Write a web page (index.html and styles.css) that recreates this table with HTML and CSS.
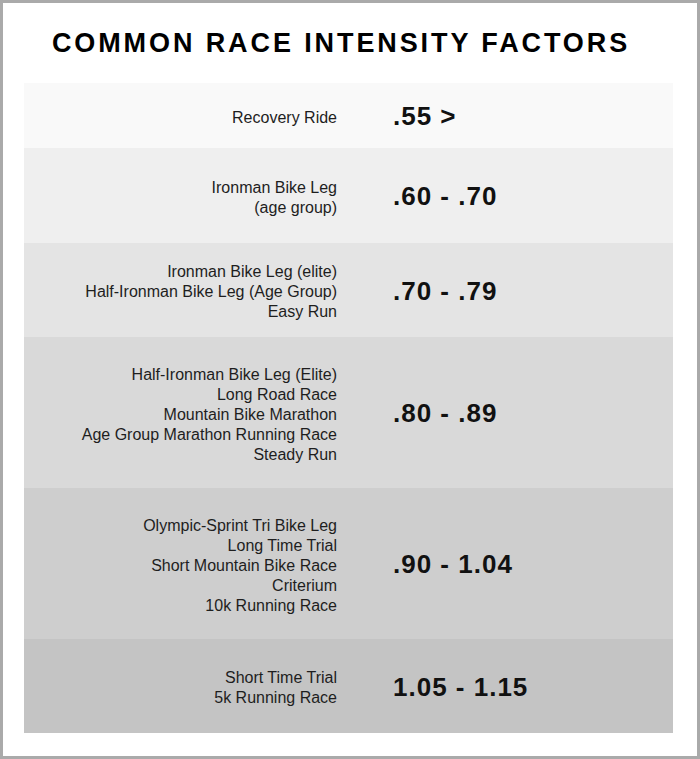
FILE: index.html
```html
<!DOCTYPE html>
<html>
<head>
<meta charset="utf-8">
<link rel="stylesheet" href="styles.css">
</head>
<body>
<div class="frame">
  <h1 class="title">COMMON RACE INTENSITY FACTORS</h1>
  <div class="table">
    <div class="row r1">
      <div class="label">Recovery Ride</div>
      <div class="value">.55 &gt;</div>
    </div>
    <div class="row r2">
      <div class="label">Ironman Bike Leg<br>(age group)</div>
      <div class="value">.60 - .70</div>
    </div>
    <div class="row r3">
      <div class="label">Ironman Bike Leg (elite)<br>Half-Ironman Bike Leg (Age Group)<br>Easy Run</div>
      <div class="value">.70 - .79</div>
    </div>
    <div class="row r4">
      <div class="label">Half-Ironman Bike Leg (Elite)<br>Long Road Race<br>Mountain Bike Marathon<br>Age Group Marathon Running Race<br>Steady Run</div>
      <div class="value">.80 - .89</div>
    </div>
    <div class="row r5">
      <div class="label">Olympic-Sprint Tri Bike Leg<br>Long Time Trial<br>Short Mountain Bike Race<br>Criterium<br>10k Running Race</div>
      <div class="value">.90 - 1.04</div>
    </div>
    <div class="row r6">
      <div class="label">Short Time Trial<br>5k Running Race</div>
      <div class="value">1.05 - 1.15</div>
    </div>
  </div>
</div>
</body>
</html>
```
FILE: styles.css
```css
html, body {
  margin: 0;
  padding: 0;
  background: #ffffff;
}
.frame {
  box-sizing: border-box;
  width: 700px;
  height: 759px;
  border: 3px solid #aaaaaa;
  font-family: "Liberation Sans", Arial, sans-serif;
}
.title {
  margin: 0;
  height: 80px;
  display: flex;
  align-items: center;
  justify-content: center;
  padding-right: 18px;
  font-size: 27px;
  font-weight: bold;
  letter-spacing: 2.9px;
  color: #000;
}
.table {
  margin-left: 21px;
  width: 649px;
  display: grid;
  grid-template-rows: 65px 95px 94px 151px 151px 94px;
}
.row {
  display: grid;
  grid-template-columns: 313px 1fr;
  column-gap: 56px;
  align-items: center;
}
.label {
  text-align: right;
  font-size: 16px;
  line-height: 20px;
  padding-top: 4px;
  color: #1e1e1e;
}
.value {
  font-size: 26px;
  font-weight: bold;
  color: #111;
  letter-spacing: 1px;
  padding-top: 2px;
}
.r1 { background: #f9f9f9; }
.r2 { background: #efefef; }
.r3 { background: #e4e4e4; }
.r4 { background: #d9d9d9; }
.r5 { background: #cecece; }
.r6 { background: #c4c4c4; }
```
